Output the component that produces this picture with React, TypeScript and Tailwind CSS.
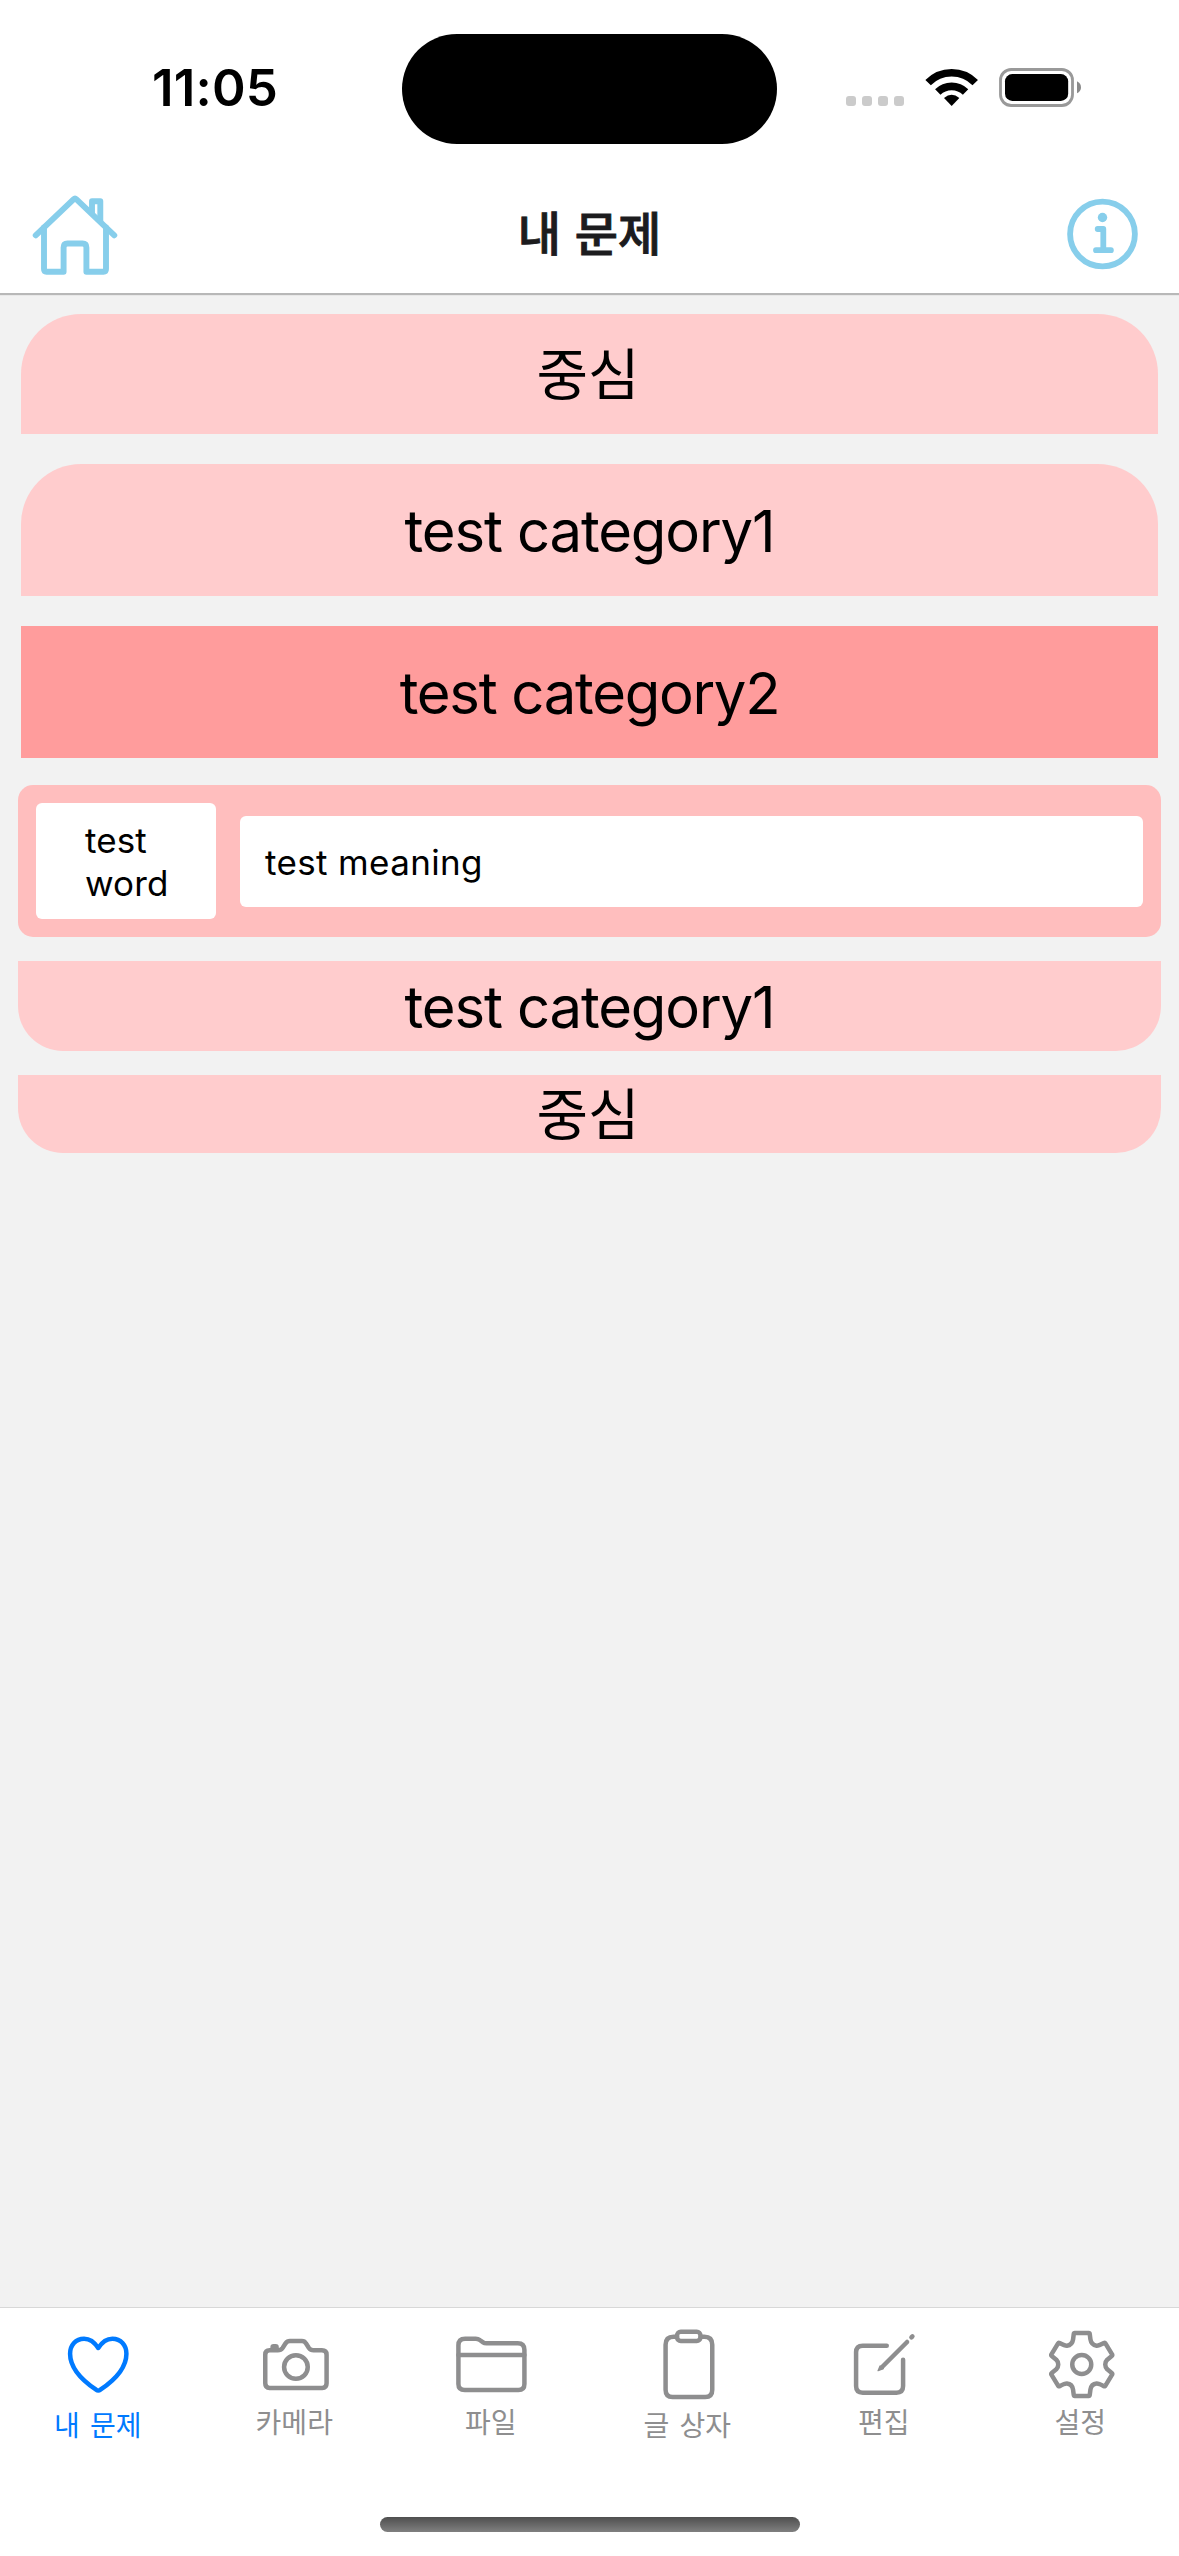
import type { ReactNode } from "react";

function StatusBar() {
  return (
    <div className="flex h-[177px] w-full items-start">
      <div className="w-[402px] pt-[58px] pl-[152px] text-[51px] leading-[60px] font-semibold tracking-[0.2px] text-black">
        11:05
      </div>
      <div className="mt-[34px] h-[110px] w-[375px] rounded-full bg-black" />
      <div className="flex pt-[66px] pl-[69px]">
        <div className="flex gap-[6px] pt-[30px]">
          <div className="size-[10px] rounded-[3px] bg-[#cbcbcb]" />
          <div className="size-[10px] rounded-[3px] bg-[#cbcbcb]" />
          <div className="size-[10px] rounded-[3px] bg-[#cbcbcb]" />
          <div className="size-[10px] rounded-[3px] bg-[#cbcbcb]" />
        </div>
        <svg className="ml-[21px] h-[42px] w-[54px]" viewBox="255 48 162 126" fill="none" stroke="#000">
          <path d="M264.3 98A99 99 0 0 1 405.7 98" strokeWidth="23" />
          <path d="M293.3 126A59.5 59.5 0 0 1 376.7 126" strokeWidth="23" />
          <path d="M335 168L312 144Q335 124 358 144Z" fill="#000" stroke="none" />
        </svg>
        <svg className="ml-[19px] h-[42px] w-[86px]" viewBox="474 48 258 126">
          <rect x="481.5" y="58.5" width="216" height="108" rx="32" fill="none" stroke="#999" strokeWidth="8.5" />
          <rect x="495" y="72" width="189.500" height="81" rx="22" fill="#000" />
          <path d="M711 94Q723 100 723 112T711 130Z" fill="#8a8a8a" />
        </svg>
      </div>
    </div>
  );
}

function NavBar() {
  return (
    <div className="grid h-[116px] grid-cols-[1fr_auto_1fr] items-center">
      <svg
        className="ml-[30px] size-[90px]"
        viewBox="30 190 90 90"
        fill="none"
        stroke="#87ceeb"
        strokeWidth="5.900"
        strokeLinecap="round"
        strokeLinejoin="round"
      >
        <path d="M35.700 235.300L73.500 199.300Q75 197.900 76.500 199.300L114.300 235.300" />
        <path d="M44 227.500V269Q44 271.700 46.500 271.700H63.600V247.500Q63.600 243.500 67.500 243.500H82.500Q86.400 243.500 86.400 247.500V271.700H103.500Q106 271.700 106 269V227.500" />
        <path d="M92 213V201.200H100.300V221" />
      </svg>
      <h1 className="pb-[8px] font-['Noto_Sans_CJK_KR',sans-serif] text-[47px] leading-[60px] font-medium [-webkit-text-stroke:0.9px_#1c1c1e] [word-spacing:3px] text-[#1c1c1e]">
        내 문제
      </h1>
      <svg
        className="mb-[3px] mr-[36px] size-[80px] justify-self-end"
        viewBox="0 0 80 80"
        fill="none"
        stroke="#87ceeb"
        strokeWidth="5.800"
        strokeLinecap="round"
        strokeLinejoin="round"
      >
        <circle cx="39.500" cy="40" r="32.400" />
        <circle cx="39.500" cy="23.500" r="4.700" fill="#87ceeb" stroke="none" />
        <path d="M34.700 35H40.300V56.200M33 56.200H47.900" />
      </svg>
    </div>
  );
}

function WordRow({ word, meaning }: { word: string; meaning: string }) {
  return (
    <div className="mx-[18px] mt-[27px] flex h-[152px] items-center rounded-[15px] bg-[#ffbebe] px-[18px] text-[35px] leading-[43px]">
      <div className="h-[116px] w-[180px] rounded-[6px] bg-white pt-[16px] pr-[40px] pl-[49px] tracking-[0.1px]">{word}</div>
      <div className="ml-[24px] h-[91px] flex-1 rounded-[6px] bg-white pt-[25px] pl-[25px] tracking-[0.35px]">{meaning}</div>
    </div>
  );
}

function Tab({ label, active, spaced, viewBox, children }: {
  label: string;
  active?: boolean;
  spaced?: boolean;
  viewBox: string;
  children: ReactNode;
}) {
  return (
    <div className={"flex flex-col items-center pt-[18px] " + (active ? "text-[#007aff]" : "text-[#8e8e8f]")}>
      <svg
        className="h-[76px] w-[80px]"
        viewBox={viewBox}
        fill="none"
        stroke="currentColor"
        strokeWidth="13.500"
        strokeLinecap="round"
        strokeLinejoin="round"
      >
        {children}
      </svg>
      <span
        className={
          "pr-[1px] font-['Noto_Sans_CJK_KR',sans-serif] text-[28px] leading-[30px] [word-spacing:4px] " +
          (spaced ? "mt-[7px]" : "mt-[4px]")
        }
      >
        {label}
      </span>
    </div>
  );
}

function TabBar() {
  return (
    <nav className="grid h-[249px] grid-cols-6 grid-rows-[209px_15px] border-t border-[#d8d8d8] bg-white">
      <Tab label="내 문제" active spaced viewBox="174.75 108 240 228">
        <path d="M295.500 174C284 156 269 146 253 146C228 146 211 165 211 191C211 237 249 272 289 299Q295.500 304 302 299C342 272 380 237 380 191C380 165 363 146 338 146C322 146 307 156 295.500 174Z" />
      </Tab>
      <Tab label="카메라" viewBox="764.25 108 240 228">
        <path d="M795 194Q795 181 808 181H833Q842 181 847 174L856 160Q861 153 869 153H905Q913 153 917 160L926 174Q931 181 940 181H965Q979 181 979 194V280Q979 294 966 294H808Q795 294 795 280Z" />
        <circle cx="887" cy="231" r="35.500" />
        <path d="M817 176V172Q817 169 820 169H826Q829 169 829 172V176Z" />
      </Tab>
      <Tab label="파일" viewBox="183.75 108 240 228">
        <path d="M206 166Q206 146 226 146H258Q265 146 270 150L280 157Q284 160 290 160H384Q404 160 404 180V282Q404 300 386 300H225Q206 300 206 282Z" />
        <path d="M206 195H404" />
      </Tab>
      <Tab label="글 상자" spaced viewBox="773.25 108 240 228">
        <path d="M860 140H850Q826 140 826 164V299Q826 321 847 321H945Q966 321 966 299V164Q966 140 942 140H932" />
        <rect x="860.500" y="125" width="70" height="28" rx="11" />
      </Tab>
      <Tab label="편집" viewBox="195.75 108 240 228">
        <path d="M324 167H252Q232 167 232 187V288Q232 308 252 308H353Q373 308 373 288V209" />
        <path d="M310 231L385 156" />
        <path d="M298 242L304 228L314 236Z" strokeWidth="4" fill="currentColor" />
        <path d="M398 142L401 139" />
      </Tab>
      <Tab label="설정" viewBox="785.25 108 240 228">
        <path d="M886.500 129H928.500Q931 129 931.500 132L933.500 148Q936 165 952 167Q958 167.500 974 159Q977 157.500 978.500 160L998.500 193Q1000 196 997.500 198L984 209Q978 215 978 223.500Q978 232 984 238L997.500 249Q1000 251 998.500 254L978.500 287Q977 290 974 288.500Q958 280 952 280.500Q936 282 933.500 299L931.500 315Q931 318 928.500 318H886.500Q884 318 883.500 315L881.500 299Q879 282 863 280.500Q857 280 841 288.500Q838 290 836.500 287L816.500 254Q815 251 817.500 249L831 238Q837 232 837 223.500Q837 215 831 209L817.500 198Q815 196 816.500 193L836.500 160Q838 157.500 841 159Q857 167.500 863 167Q879 165 881.500 148L883.500 132Q884 129 886.500 129Z" />
        <circle cx="907.500" cy="223.500" r="28.500" />
      </Tab>
      <div className="col-span-6 mx-auto h-[15px] w-[420px] rounded-full bg-linear-to-b from-[#4f4f4f] to-[#808080]" />
    </nav>
  );
}

export default function App() {
  return (
    <div className="flex h-[2556px] w-[1179px] flex-col overflow-hidden bg-[#f2f2f2] font-['Inter','Noto_Sans_CJK_KR',sans-serif] text-black">
      <header className="h-[293px] shrink-0 bg-white shadow-[0_1px_1px_1px_rgba(0,0,0,0.24)]">
        <StatusBar />
        <NavBar />
      </header>

      <main className="flex flex-1 flex-col text-center text-[58px] tracking-[-1.15px]">
        <div className="mx-[21px] mt-[21px] h-[120px] rounded-t-[60px] bg-[#ffcccd] pr-[3px] font-['Noto_Sans_CJK_KR',sans-serif] text-[56px] leading-[113px] tracking-normal">
          중심
        </div>
        <div className="mx-[21px] mt-[30px] h-[132px] rounded-t-[60px] bg-[#ffcccd] leading-[134px]">test category1</div>
        <div className="mx-[21px] mt-[30px] h-[132px] bg-[#ff9c9c] leading-[134px] tracking-[-1.3px]">test category2</div>
        <div className="text-left">
          <WordRow word="test word" meaning="test meaning" />
        </div>
        <div className="mx-[18px] mt-[24px] h-[90px] rounded-b-[45px] bg-[#ffcccd] leading-[92px]">test category1</div>
        <div className="mx-[18px] mt-[24px] h-[78px] rounded-b-[45px] bg-[#ffcccd] pr-[3px] font-['Noto_Sans_CJK_KR',sans-serif] text-[56px] leading-[71px] tracking-normal">
          중심
        </div>
      </main>

      <TabBar />
    </div>
  );
}
